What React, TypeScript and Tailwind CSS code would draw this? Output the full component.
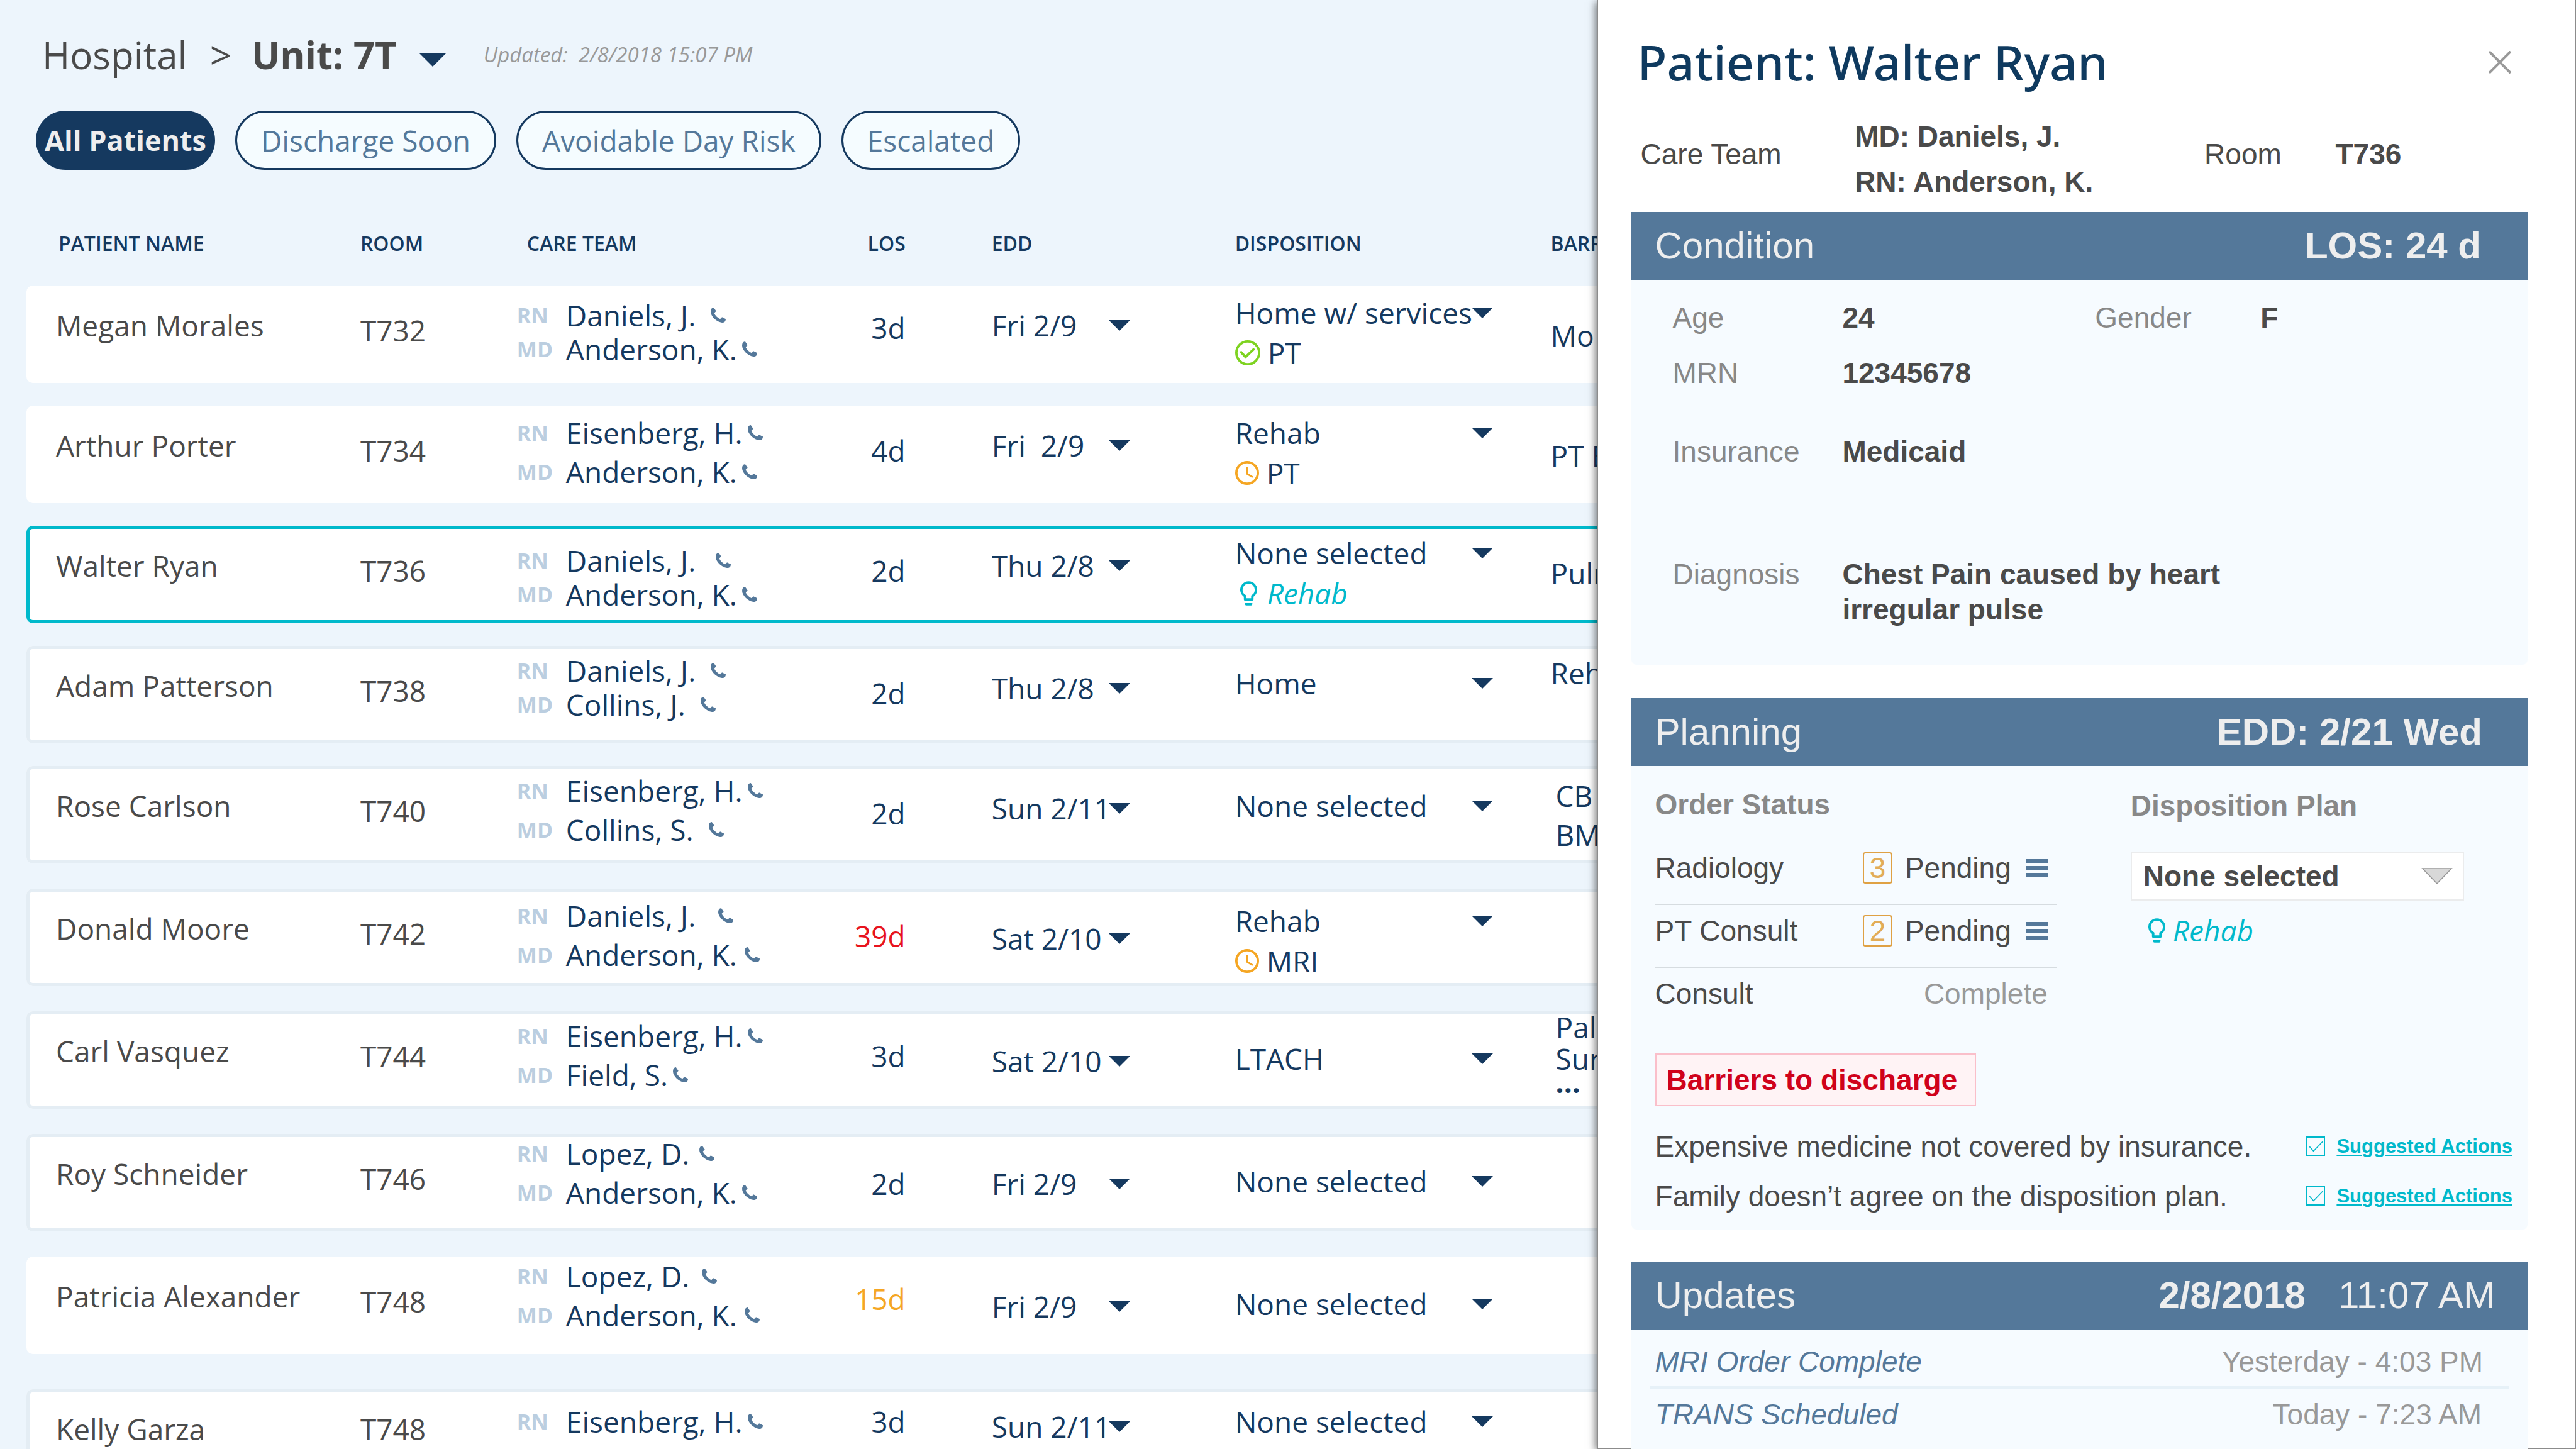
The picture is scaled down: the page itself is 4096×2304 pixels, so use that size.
import type { ReactNode } from "react";

type Note = { kind: "done" | "pending" | "hint"; text: string };
type Member = { role: "RN" | "MD"; name: string; gap?: string };
type Patient = {
  name: string;
  room: string;
  roomTop?: string;
  team: Member[];
  teamTop: string;
  teamLine: string;
  los: string;
  losTop: string;
  losColor?: string;
  edd: string;
  eddTop: string;
  disposition: string;
  dispositionTop: string;
  note?: Note;
  barriers: string[];
  barriersTop: string;
  barriersLine?: string;
  frame: string;
  space: string;
};

const FRAME_PLAIN = "";
const FRAME_SOFT = "ring-[5px] ring-inset ring-[#e4edf4]";
const FRAME_ACTIVE = "ring-[5px] ring-inset ring-[#00b9cb]";

const patients: Patient[] = [
  {
    name: "Megan Morales", room: "T732",
    team: [{ role: "RN", name: "Daniels, J.", gap: "ml-6" }, { role: "MD", name: "Anderson, K." }],
    teamTop: "pt-5", teamLine: "leading-[54px]",
    los: "3d", losTop: "pt-9", edd: "Fri 2/9", eddTop: "pt-8",
    disposition: "Home w/ services", dispositionTop: "pt-3", note: { kind: "done", text: "PT" },
    barriers: ["Mo"], barriersTop: "pt-12", frame: FRAME_PLAIN, space: "mt-[45px]",
  },
  {
    name: "Arthur Porter", room: "T734",
    team: [{ role: "RN", name: "Eisenberg, H." }, { role: "MD", name: "Anderson, K." }],
    teamTop: "pt-3", teamLine: "leading-[62px]",
    los: "4d", losTop: "pt-10", edd: "Fri\u00a0 2/9", eddTop: "pt-8",
    disposition: "Rehab", dispositionTop: "pt-3", note: { kind: "pending", text: "PT" },
    barriers: ["PT E"], barriersTop: "pt-12", frame: FRAME_PLAIN, space: "mt-9",
  },
  {
    name: "Walter Ryan", room: "T736",
    team: [{ role: "RN", name: "Daniels, J.", gap: "ml-8" }, { role: "MD", name: "Anderson, K." }],
    teamTop: "pt-7", teamLine: "leading-[54px]",
    los: "2d", losTop: "pt-10", edd: "Thu 2/8", eddTop: "pt-8",
    disposition: "None selected", dispositionTop: "pt-3", note: { kind: "hint", text: "Rehab" },
    barriers: ["Pulm"], barriersTop: "pt-11", frame: FRAME_ACTIVE, space: "mt-9",
  },
  {
    name: "Adam Patterson", room: "T738",
    team: [{ role: "RN", name: "Daniels, J.", gap: "ml-6" }, { role: "MD", name: "Collins, J.", gap: "ml-6" }],
    teamTop: "pt-3", teamLine: "leading-[54px]",
    los: "2d", losTop: "pt-11", edd: "Thu 2/8", eddTop: "pt-9",
    disposition: "Home", dispositionTop: "pt-7",
    barriers: ["Reh"], barriersTop: "pt-3", frame: FRAME_SOFT, space: "mt-9",
  },
  {
    name: "Rose Carlson", room: "T740",
    team: [{ role: "RN", name: "Eisenberg, H." }, { role: "MD", name: "Collins, S.", gap: "ml-6" }],
    teamTop: "pt-2", teamLine: "leading-[62px]",
    los: "2d", losTop: "pt-11", edd: "Sun 2/11", eddTop: "pt-9",
    disposition: "None selected", dispositionTop: "pt-8",
    barriers: ["CB", "BM"], barriersTop: "pt-4 pl-2", frame: FRAME_SOFT, space: "mt-9",
  },
  {
    name: "Donald Moore", room: "T742",
    team: [{ role: "RN", name: "Daniels, J.", gap: "ml-9" }, { role: "MD", name: "Anderson, K.", gap: "ml-3" }],
    teamTop: "pt-3", teamLine: "leading-[62px]",
    los: "39d", losTop: "pt-11", losColor: "text-[#e8131d]", edd: "Sat 2/10", eddTop: "pt-12",
    disposition: "Rehab", dispositionTop: "pt-5", note: { kind: "pending", text: "MRI" },
    barriers: [], barriersTop: "pt-12", frame: FRAME_SOFT, space: "mt-10",
  },
  {
    name: "Carl Vasquez", room: "T744",
    team: [{ role: "RN", name: "Eisenberg, H." }, { role: "MD", name: "Field, S." }],
    teamTop: "pt-2", teamLine: "leading-[62px]",
    los: "3d", losTop: "pt-10", edd: "Sat 2/10", eddTop: "pt-12",
    disposition: "LTACH", dispositionTop: "pt-11",
    barriers: ["Pal", "Sur", "\u00b7\u00b7\u00b7"], barriersTop: "pt-0 pl-2", barriersLine: "leading-[50px]",
    frame: FRAME_SOFT, space: "mt-10",
  },
  {
    name: "Roy Schneider", room: "T746",
    team: [{ role: "RN", name: "Lopez, D.", gap: "ml-4" }, { role: "MD", name: "Anderson, K." }],
    teamTop: "pt-0", teamLine: "leading-[62px]",
    los: "2d", losTop: "pt-12", edd: "Fri 2/9", eddTop: "pt-12",
    disposition: "None selected", dispositionTop: "pt-11",
    barriers: [], barriersTop: "pt-12", frame: FRAME_SOFT, space: "mt-10",
  },
  {
    name: "Patricia Alexander", room: "T748",
    team: [{ role: "RN", name: "Lopez, D.", gap: "ml-5" }, { role: "MD", name: "Anderson, K.", gap: "ml-3" }],
    teamTop: "pt-0", teamLine: "leading-[62px]",
    los: "15d", losTop: "pt-9", losColor: "text-[#f5a623]", edd: "Fri 2/9", eddTop: "pt-12",
    disposition: "None selected", dispositionTop: "pt-11",
    barriers: [], barriersTop: "pt-12", frame: FRAME_PLAIN, space: "mt-10",
  },
  {
    name: "Kelly Garza", room: "T748", roomTop: "pt-8",
    team: [{ role: "RN", name: "Eisenberg, H." }],
    teamTop: "pt-5", teamLine: "leading-[62px]",
    los: "3d", losTop: "pt-5", edd: "Sun 2/11", eddTop: "pt-7",
    disposition: "None selected", dispositionTop: "pt-5",
    barriers: [], barriersTop: "pt-12", frame: FRAME_SOFT, space: "mt-14",
  },
];

const COLUMNS =
  "grid grid-cols-[minmax(0,484fr)_minmax(0,249fr)_minmax(0,498fr)_minmax(0,120fr)_minmax(0,524fr)_minmax(0,502fr)_minmax(0,90fr)] -mr-4 pl-[47px]";

function Caret({ className }: { className: string }) {
  return (
    <svg viewBox="0 0 34 17" className={className} aria-hidden="true">
      <path d="M0 0H34L17 17Z" fill="#15395f" />
    </svg>
  );
}

function Phone() {
  return (
    <svg viewBox="0 0 38 38" className="size-6 shrink-0" aria-hidden="true">
      <path
        d="M7.6 0L13.8 9.3L9 14C11 20 18 27 24 28.7L28.6 24L38 28.7C38 34.5 35 38 28.5 38C14 36 0 22 0 10C0 4 3 .5 7.6 0Z"
        fill="#54789a"
      />
    </svg>
  );
}

function Bulb() {
  return (
    <svg viewBox="0 0 42 60" className="h-[39px] w-[27px] shrink-0" aria-hidden="true">
      <path d="M12 45V36.6A18 18 0 1 1 30 36.6V45Z" fill="none" stroke="#00b9cb" strokeWidth="6" strokeLinejoin="round" />
      <path d="M12 54H30V57A3 3 0 0 1 27 60H15A3 3 0 0 1 12 57Z" fill="#00b9cb" />
    </svg>
  );
}

function DoneIcon() {
  return (
    <svg viewBox="0 0 63 63" className="size-10 shrink-0" fill="none" stroke="#7ed321" strokeWidth="6" aria-hidden="true">
      <circle cx="31.5" cy="31.5" r="28.5" />
      <path d="M13 28L26 42L48 21" />
    </svg>
  );
}

function ClockIcon() {
  return (
    <svg viewBox="0 0 60 60" className="size-[38px] shrink-0" fill="none" stroke="#f5a623" aria-hidden="true">
      <circle cx="30" cy="30" r="27" strokeWidth="6" />
      <path d="M29.5 15V32L44 40.5" strokeWidth="4.5" />
    </svg>
  );
}

function CloseIcon() {
  return (
    <svg viewBox="0 0 36 36" className="size-9" fill="none" stroke="#999999" strokeWidth="4" aria-hidden="true">
      <path d="M1 1L35 35M35 1L1 35" />
    </svg>
  );
}

function MenuIcon() {
  return (
    <svg viewBox="0 0 34 28" className="h-7 w-[34px]" fill="#54789a" aria-hidden="true">
      <path d="M0 0H34V6H0ZM0 11H34V17H0ZM0 22H34V28H0Z" />
    </svg>
  );
}

function InlineSelect({ label, value, width }: { label: string; value: string; width: string }) {
  return (
    <div className={`grid h-[62px] items-center ${width}`}>
      <select aria-label={label} defaultValue={value} className="col-start-1 row-start-1 h-[62px] w-full appearance-none bg-transparent leading-[62px]">
        <option value={value}>{value}</option>
      </select>
      <Caret className="pointer-events-none col-start-1 row-start-1 h-[17px] w-[34px] justify-self-end" />
    </div>
  );
}

function NoteLine({ note }: { note: Note }) {
  if (note.kind === "hint") {
    return (
      <p className="flex items-center gap-4 pl-2 leading-[66px] text-[#00b9cb] italic">
        <Bulb />
        {note.text}
      </p>
    );
  }
  return (
    <p className="flex items-center gap-3 leading-[66px]">
      {note.kind === "done" ? <DoneIcon /> : <ClockIcon />}
      {note.text}
    </p>
  );
}

function PatientRow({ p }: { p: Patient }) {
  return (
    <tr className={`${COLUMNS} ${p.space} ${p.frame} h-[155px] rounded-[10px] bg-white text-[46px] leading-[62px] whitespace-nowrap text-[#15395f]`}>
      <td className="pt-8 text-[#4a4a4a]">{p.name}</td>
      <td className={`${p.roomTop ?? "pt-10"} text-[#4a4a4a]`}>{p.room}</td>
      <td className={`${p.teamTop} ${p.teamLine}`}>
        {p.team.map((m) => (
          <div key={m.role} className="flex items-center">
            <span className="w-[78px] text-[34px] font-bold text-[#bbcee0]">{m.role}</span>
            {m.name}
            <button type="button" aria-label={`Call ${m.name}`} className={m.gap ?? "ml-2"}>
              <Phone />
            </button>
          </div>
        ))}
      </td>
      <td className={`${p.losTop} text-right ${p.losColor ?? ""}`}>{p.los}</td>
      <td className={`${p.eddTop} pl-[137px]`}>
        <InlineSelect label={`Expected discharge date for ${p.name}`} value={p.edd} width="w-[220px]" />
      </td>
      <td className={p.dispositionTop}>
        <InlineSelect label={`Disposition for ${p.name}`} value={p.disposition} width="w-[410px]" />
        {p.note && <NoteLine note={p.note} />}
      </td>
      <td className={`${p.barriersTop} ${p.barriersLine ?? ""}`}>
        {p.barriers.map((b) => (
          <div key={b} className={b === "\u00b7\u00b7\u00b7" ? "font-bold" : ""}>{b}</div>
        ))}
      </td>
    </tr>
  );
}

function Chip({ children }: { children: ReactNode }) {
  return (
    <button type="button" className="h-[94px] rounded-full border-[3px] border-[#15395f] bg-[#f5fcff] px-[38px] text-[46px] text-[#54789a]">
      {children}
    </button>
  );
}

function SectionBar({ title, children }: { title: string; children: ReactNode }) {
  return (
    <header className="flex h-[108px] items-center justify-between bg-[#54789a] pl-[38px] text-[60px] text-[#eeeeee]">
      <h2>{title}</h2>
      {children}
    </header>
  );
}

function OrderRow({ name, count }: { name: string; count: number }) {
  return (
    <li className="flex h-[100px] items-center border-b-2 border-[#d6dce0] pb-4">
      <span className="flex-1">{name}</span>
      <span className="flex h-[50px] w-[47px] items-center justify-center rounded-[4px] border-2 border-[#dfa144] text-[#e2ac57]">{count}</span>
      <span className="pl-5">Pending</span>
      <button type="button" aria-label={`${name} orders`} className="mr-[14px] ml-6">
        <MenuIcon />
      </button>
    </li>
  );
}

function BarrierRow({ id, text }: { id: string; text: string }) {
  return (
    <li className="flex h-[79px] items-center justify-between pr-6">
      <span>{text}</span>
      <span className="flex items-center gap-[18px]">
        <span className="grid">
          <input
            id={id}
            type="checkbox"
            defaultChecked
            aria-label={`Suggested actions for: ${text}`}
            className="col-start-1 row-start-1 size-[31px] appearance-none border-2 border-[#00b9cb]"
          />
          <svg viewBox="0 0 48 48" className="pointer-events-none col-start-1 row-start-1 size-[31px]" fill="none" stroke="#00b9cb" strokeWidth="2.4" aria-hidden="true">
            <path d="M9.6 25L19.6 36L42.8 12" />
          </svg>
        </span>
        <a href="#suggested" className="text-[31px] font-bold text-[#00b9cb] underline decoration-2 underline-offset-[3px]">
          Suggested Actions
        </a>
      </span>
    </li>
  );
}

export default function App() {
  return (
    <div className="flex h-screen overflow-hidden bg-[#edf5fc] font-['Open_Sans','Noto_Sans',sans-serif]">
      <main className="min-w-0 flex-1 overflow-hidden pt-[45px] pl-[42px]">
        <div className="flex h-[84px] items-center pl-[25px] text-[60px] whitespace-pre text-[#4a4a4a]">
          <a href="#hospital">Hospital</a>
          <span className="pr-8 pl-9">&gt;</span>
          <button type="button" className="flex items-center gap-9 font-bold">
            Unit: 7T
            <Caret className="mt-4 h-[21px] w-[42px]" />
          </button>
          <span className="pl-[60px] text-[33px] text-[#999999] italic">Updated:  2/8/2018 15:07 PM</span>
        </div>

        <nav className="mt-[47px] flex gap-8 pl-[15px]" aria-label="Filters">
          <button type="button" className="h-[94px] rounded-full bg-[#15395f] px-[14px] text-[45px] font-bold text-[#eeeeee]">
            All Patients
          </button>
          <Chip>Discharge Soon</Chip>
          <Chip>Avoidable Day Risk</Chip>
          <Chip>Escalated</Chip>
        </nav>

        <table className="mt-[95px] block">
          <thead className="block">
            <tr className={`${COLUMNS} text-left text-[32px] leading-[44px] whitespace-nowrap text-[#15395f]`}>
              <th className="pl-1 font-semibold">PATIENT NAME</th>
              <th className="font-semibold">ROOM</th>
              <th className="pl-4 font-semibold">CARE TEAM</th>
              <th className="text-right font-semibold">LOS</th>
              <th className="pl-[137px] font-semibold">EDD</th>
              <th className="font-semibold">DISPOSITION</th>
              <th className="font-semibold">BARRIERS</th>
            </tr>
          </thead>
          <tbody className="block">
            {patients.map((p) => (
              <PatientRow key={p.name} p={p} />
            ))}
          </tbody>
        </table>
      </main>

      <aside className="relative z-10 flex h-full w-[38%] shrink-0 flex-col border-x border-b border-[#8c8c8c] bg-white pt-[47px] pr-[76px] pl-[53px] font-['Liberation_Sans',sans-serif] text-[46px] leading-[56px] text-[#4a4a4a] shadow-[-3px_3px_12px_rgba(0,0,0,0.55)]">
        <div className="flex items-center justify-between pr-[26px] pl-[10px]">
          <h1 className="font-['Noto_Sans','Open_Sans',sans-serif] text-[77px] leading-[104px] font-medium text-[#0f3a5f]">
            Patient: Walter Ryan
          </h1>
          <button type="button" aria-label="Close">
            <CloseIcon />
          </button>
        </div>

        <dl className="mt-[30px] grid grid-cols-[340fr_555fr_208fr_305fr] pl-[15px] leading-[72px]">
          <dt className="pt-7">Care Team</dt>
          <dd className="font-bold">
            <p>MD: Daniels, J.</p>
            <p>RN: Anderson, K.</p>
          </dd>
          <dt className="pt-7">Room</dt>
          <dd className="pt-7 font-bold">T736</dd>
        </dl>

        <section className="mt-3">
          <SectionBar title="Condition">
            <p className="pr-[74px] font-bold">LOS: 24 d</p>
          </SectionBar>
          <dl className="grid h-[612px] grid-cols-[270fr_402fr_263fr_425fr] content-start rounded-b-[8px] bg-[#f6fbff] pt-8 pl-[66px] text-[#888888]">
            <dt>Age</dt>
            <dd className="font-bold text-[#4a4a4a]">24</dd>
            <dt>Gender</dt>
            <dd className="font-bold text-[#4a4a4a]">F</dd>
            <dt className="pt-8">MRN</dt>
            <dd className="col-span-3 pt-8 font-bold text-[#4a4a4a]">12345678</dd>
            <dt className="pt-[69px]">Insurance</dt>
            <dd className="col-span-3 pt-[69px] font-bold text-[#4a4a4a]">Medicaid</dd>
            <dt className="pt-[139px]">Diagnosis</dt>
            <dd className="col-span-2 pt-[139px] font-bold text-[#4a4a4a]">Chest Pain caused by heart irregular pulse</dd>
          </dl>
        </section>

        <section className="mt-[53px]">
          <SectionBar title="Planning">
            <p className="pr-[72px] font-bold">EDD: 2/21 Wed</p>
          </SectionBar>
          <div className="rounded-b-[8px] bg-[#f6fbff] pt-[29px] pb-[14px] pl-[38px]">
            <div className="grid grid-cols-[637fr_630fr] gap-x-[118px]">
              <div>
                <h3 className="leading-[64px] font-bold text-[#888888]">Order Status</h3>
                <ul className="mt-7">
                  <OrderRow name="Radiology" count={3} />
                  <OrderRow name="PT Consult" count={2} />
                  <li className="flex h-[82px] items-center justify-between pr-[14px]">
                    <span>Consult</span>
                    <span className="text-[#999999]">Complete</span>
                  </li>
                </ul>
              </div>
              <div>
                <label htmlFor="disposition-plan" className="block leading-[68px] font-bold text-[#888888]">
                  Disposition Plan
                </label>
                <div className="mt-[39px] grid w-[530px] items-center">
                  <select
                    id="disposition-plan"
                    defaultValue="None selected"
                    className="col-start-1 row-start-1 h-[78px] w-full appearance-none border-2 border-[#ebeced] bg-white pl-[18px] font-bold"
                  >
                    <option>None selected</option>
                  </select>
                  <svg viewBox="0 0 50 26" className="pointer-events-none col-start-1 row-start-1 mr-[18px] h-[26px] w-[50px] justify-self-end" aria-hidden="true">
                    <path d="M2 1H48L25 25Z" fill="#d8d8d8" stroke="#979797" strokeWidth="1.5" />
                  </svg>
                </div>
                <p className="mt-4 flex items-center gap-3 pl-7 font-['Open_Sans','Noto_Sans',sans-serif] leading-[62px] text-[#00b9cb] italic">
                  <Bulb />
                  Rehab
                </p>
              </div>
            </div>
            <h3 className="mt-[54px] flex h-[84px] w-fit items-center border-2 border-[#fabfca] bg-[#fff3f5] pr-7 pl-4 font-bold text-[#d0021b]">
              Barriers to discharge
            </h3>
            <ul className="mt-6">
              <BarrierRow id="barrier-cost" text="Expensive medicine not covered by insurance." />
              <BarrierRow id="barrier-family" text="Family doesn’t agree on the disposition plan." />
            </ul>
          </div>
        </section>

        <section className="mt-[51px]">
          <SectionBar title="Updates">
            <p className="flex gap-[52px] pr-[52px]">
              <span className="font-bold">2/8/2018</span>
              <span>11:07 AM</span>
            </p>
          </SectionBar>
          <ul className="bg-[#f6fbff] pr-[30px] pb-20 pl-[30px]">
            <li className="flex h-[94px] items-center justify-between border-b-4 border-[#e6f1f8] pt-3 pr-[41px] pl-2">
              <span className="text-[#54789a] italic">MRI Order Complete</span>
              <span className="text-[#999999]">Yesterday - 4:03 PM</span>
            </li>
            <li className="flex h-[82px] items-center justify-between pr-[43px] pl-2">
              <span className="text-[#54789a] italic">TRANS Scheduled</span>
              <span className="text-[#999999]">Today - 7:23 AM</span>
            </li>
          </ul>
        </section>
      </aside>
    </div>
  );
}
